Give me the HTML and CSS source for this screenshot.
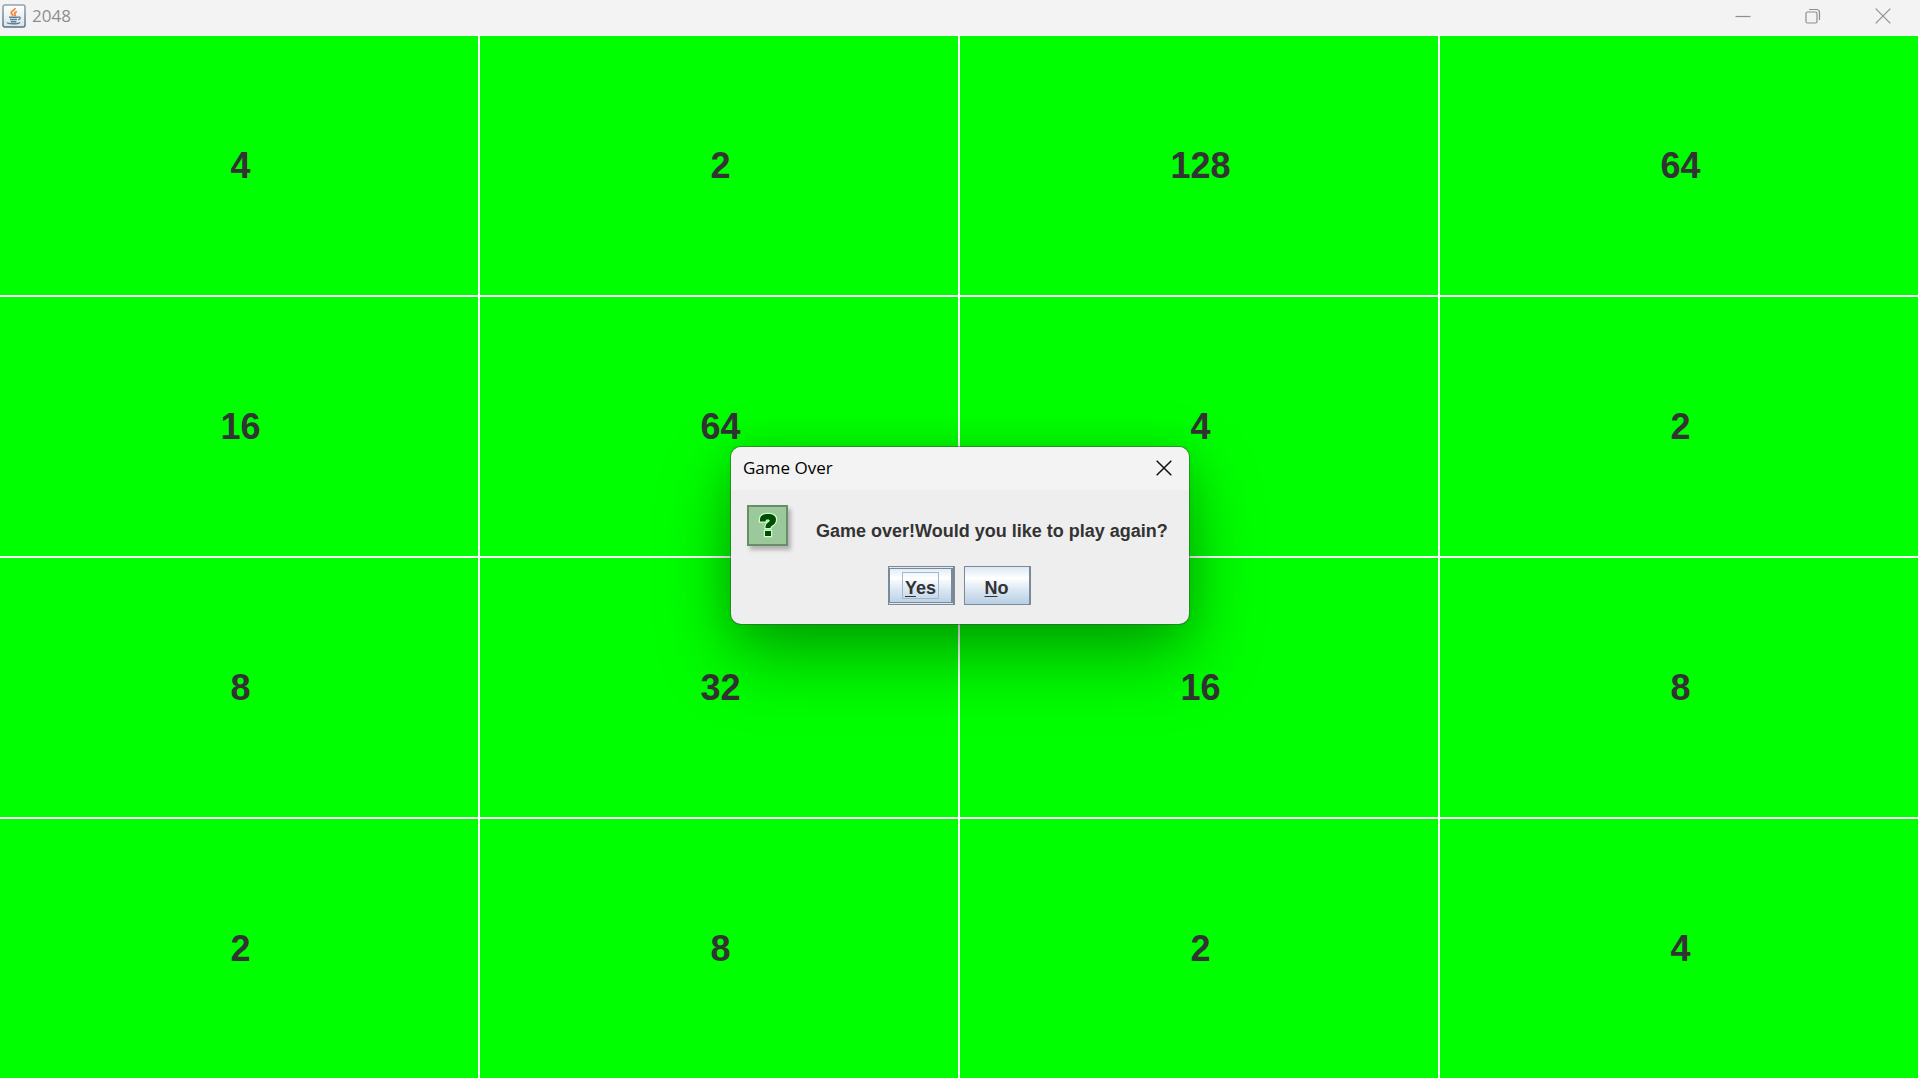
FILE: index.html
```html
<!DOCTYPE html>
<html lang="en">
<head>
<meta charset="utf-8">
<title>2048</title>
<link rel="stylesheet" href="styles.css">
</head>
<body>
<div class="window">
  <header class="titlebar">
    <svg class="java" width="24" height="24" viewBox="0 0 24 24" aria-hidden="true">
      <defs><linearGradient id="plate" x1="0" y1="0" x2="0" y2="1"><stop offset="0" stop-color="#fff"/><stop offset="1" stop-color="#dde2e6"/></linearGradient>
      <linearGradient id="rim" x1="0" y1="0" x2="0" y2="1"><stop offset="0" stop-color="#8fa3b3"/><stop offset="1" stop-color="#56738c"/></linearGradient></defs>
      <rect x="1" y="1" width="22" height="22" rx="2" fill="url(#plate)" stroke="url(#rim)" stroke-width="1.5"/>
      <path d="M13 4c.8 2-4.500 2.800-3.800 5 .2 1 1.700 1.600 2 2.800M15 7.500c-2.200.7-3 1.600-2 2.700.6.8.2 1.300-.6 1.800" fill="none" stroke="#ee8a3c" stroke-width="1.800"/>
      <path d="M7 13.200h8.800M8 15.500h7M8.800 17.700h5.500M16 13.200c2.700-.7 2.800 2 .2 2.700M5.500 18.300c-1.500 2 11.500 2 12.500.1" fill="none" stroke="#5d7f9e" stroke-width="1.400"/>
    </svg>
    <h1 class="caption">2048</h1>
    <div class="controls">
      <button class="control" aria-label="Minimize"><svg width="16" height="16" viewBox="0 0 16 16"><path d="M.5 8.500h15"/></svg></button>
      <button class="control" aria-label="Restore"><svg width="16" height="16" viewBox="0 0 16 16"><rect x="1" y="4" width="11" height="11" rx="1.500"/><path d="M4 1.500h7.500a3 3 0 0 1 3 3V12"/></svg></button>
      <button class="control" aria-label="Close"><svg width="16" height="16" viewBox="0 0 16 16"><path d="M.7 .7l14.600 14.600M15.300 .7L.7 15.300"/></svg></button>
    </div>
  </header>
  <main class="board">
    <div class="tile">4</div><div class="tile">2</div><div class="tile">128</div><div class="tile">64</div>
    <div class="tile">16</div><div class="tile">64</div><div class="tile">4</div><div class="tile">2</div>
    <div class="tile">8</div><div class="tile">32</div><div class="tile">16</div><div class="tile">8</div>
    <div class="tile">2</div><div class="tile">8</div><div class="tile">2</div><div class="tile">4</div>
  </main>
  <div class="overlay">
    <section class="dialog" role="dialog" aria-labelledby="dialog-title">
      <header class="dialog-bar">
        <h2 class="dialog-title" id="dialog-title">Game Over</h2>
        <button class="dialog-close" aria-label="Close"><svg width="16" height="16" viewBox="0 0 16 16"><path d="M.7 .7l14.600 14.600M15.300 .7L.7 15.300"/></svg></button>
      </header>
      <div class="dialog-body">
        <div class="question">
          <svg class="mark" width="20" height="26" viewBox="0 0 20 26" aria-hidden="true">
            <path d="M2 7.500C2 3.500 5 2 10 2s8 2 8 5.500-2 5-4 6.200c-1.200.7-1.500 1.300-1.500 2.300h-5c0-3 .8-4.200 3-5.700 2-1.400 1.500-2.800-.8-2.800-1.700 0-2 .5-2.200 2H2zM7 19h6v5H7z" fill="#004f00" stroke="#ccffcc" stroke-width="2.400" paint-order="stroke"/>
          </svg>
        </div>
        <p class="message">Game over!Would you like to play again?</p>
      </div>
      <div class="actions">
        <button class="choice choice-default"><span class="focus"><span class="key">Y</span>es</span></button>
        <button class="choice"><span class="key">N</span>o</button>
      </div>
    </section>
  </div>
</div>
</body>
</html>
```
FILE: styles.css
```css
* { box-sizing: border-box; }

body { margin: 0; }

button { padding: 0; border: 0; background: none; }

.window {
  position: relative;
  display: flex;
  flex-direction: column;
  min-height: 100vh;
  font-family: "Liberation Sans", Arial, sans-serif;
  color: #333;
}

.titlebar {
  display: flex;
  align-items: center;
  height: 36px;
  padding: 0 2px 3px 2px;
  background: #f3f3f3;
  border-bottom: 1px solid #fafafa;
}

.caption {
  margin: 0 0 0 6px;
  font: 400 17px/24px "Open Sans", sans-serif;
  color: #8e8e8e;
}

.controls { display: flex; margin-left: auto; }

.control {
  display: grid;
  place-items: center;
  width: 70px;
  height: 32px;
}

.control svg { fill: none; stroke: #8e8e8e; stroke-width: 1.2; }

.board {
  flex: 1;
  display: grid;
  grid-template: repeat(4, 1fr) / repeat(4, 1fr);
}

.tile {
  display: grid;
  place-items: center;
  padding-left: 3px;
  border: solid #fff;
  border-width: 0 2px 2px 0;
  background: #0f0;
  font-size: 36px;
  font-weight: 700;
}

.overlay {
  position: absolute;
  inset: 0;
  display: grid;
  place-items: center;
  padding-bottom: 9px;
}

.dialog {
  width: 458px;
  padding-bottom: 19px;
  border-radius: 10px;
  background: #eee;
  box-shadow: 0 0 0 1px rgba(70, 70, 70, .5), 0 32px 72px rgba(0, 0, 0, .34), 0 4px 36px rgba(0, 0, 0, .12);
}

.dialog-bar {
  display: flex;
  align-items: center;
  justify-content: space-between;
  height: 43px;
  padding: 0 17px 2px 12px;
  border-radius: 10px 10px 0 0;
  background: #f3f3f3;
}

.dialog-title {
  margin: 0;
  font: 400 17px/24px "Open Sans", sans-serif;
  color: #000;
}

.dialog-close { display: grid; }

.dialog-close svg { fill: none; stroke: #111; stroke-width: 1.5; }

.dialog-body {
  display: flex;
  align-items: flex-start;
  gap: 28px;
  padding: 15px 12px 0 16px;
}

.question {
  display: grid;
  place-items: center;
  width: 41px;
  height: 41px;
  padding-bottom: 2px;
  border: 2px solid #698c69;
  background: #9bc99b;
  box-shadow: 3px 4px 4px rgba(0, 0, 0, .25);
}

.message {
  margin: 15px 0 0;
  font-size: 18px;
  font-weight: 700;
  line-height: 22px;
  white-space: nowrap;
}

.actions {
  display: flex;
  justify-content: center;
  gap: 9px;
  padding: 20px 2px 0 0;
}

.choice {
  display: grid;
  grid-auto-flow: column;
  place-content: center;
  width: 67px;
  height: 39px;
  padding-top: 4px;
  border: 1px solid #7a8a99;
  border-right-width: 2px;
  background: linear-gradient(#dde8f3, #fff 30%, #dde8f3 60%, #b8cfe5);
  font: 700 18px/24px "Liberation Sans", Arial, sans-serif;
  color: #333;
}

.choice-default {
  padding-top: 0;
  box-shadow: inset 0 1px #dde8f3, inset 0 -1px #dde8f3, inset -2px 0 #7a8a99, inset 1px 0 #7a8a99, inset 0 2px #7a8a99, inset 0 -2px #7a8a99;
}

.focus {
  width: 37px;
  height: 27px;
  padding-top: 3px;
  border: 1px solid #a3b8cc;
}

.key { text-decoration: underline; text-decoration-thickness: 1px; text-underline-offset: 2px; }
```
